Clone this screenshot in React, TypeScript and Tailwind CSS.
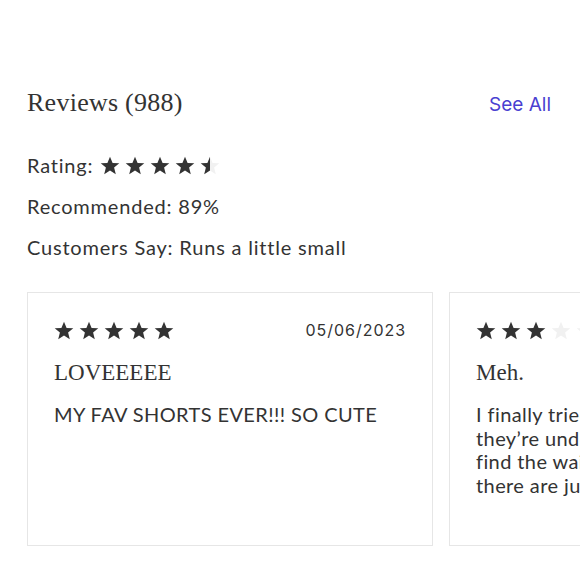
import React from 'react'

const SERIF = { fontFamily: '"Liberation Serif", "Times New Roman", serif' }
const SANS = { fontFamily: 'Lato, "Open Sans", sans-serif' }
const GEO = { fontFamily: 'Inter, "Noto Sans", sans-serif' }

const STAR = '10,0.8 12.6,7 19.3,7.3 14.1,11.6 15.8,18.2 10,14.5 4.2,18.2 5.9,11.6 0.7,7.3 7.4,7'

function Star({ fill }: { fill: 'full' | 'half' | 'empty' }) {
  return (
    <svg width="20" height="19" viewBox="0 0 20 19" className="shrink-0">
      <defs>
        <clipPath id="half-star">
          <rect x="0" y="0" width="10" height="19" />
        </clipPath>
      </defs>
      <polygon points={STAR} fill={fill === 'full' ? '#333333' : '#f1f1f1'} />
      {fill === 'half' && <polygon points={STAR} fill="#333333" clipPath="url(#half-star)" />}
    </svg>
  )
}

function Stars({ rating }: { rating: number }) {
  return (
    <div className="flex items-center gap-[5px]">
      {[1, 2, 3, 4, 5].map((n) => (
        <Star key={n} fill={rating >= n ? 'full' : rating >= n - 0.5 ? 'half' : 'empty'} />
      ))}
    </div>
  )
}

type Review = { rating: number; date: string; title: string; body: React.ReactNode }

const REVIEWS: Review[] = [
  { rating: 5, date: '05/06/2023', title: 'LOVEEEEE', body: 'MY FAV SHORTS EVER!!! SO CUTE' },
  {
    rating: 3,
    date: '04/28/2023',
    title: 'Meh.',
    body: (
      <>
        I finally tried these on and honestly<br />
        they’re underwhelming. I usually<br />
        find the waist too loose and<br />
        there are just too many pleats.
      </>
    ),
  },
]

function ReviewCard({ review }: { review: Review }) {
  return (
    <div className="w-[406px] h-[254px] shrink-0 border border-[#e6e6e6] bg-white px-[26px] pt-[27px]">
      <div className="flex items-center justify-between h-[20px]">
        <Stars rating={review.rating} />
        <span className="text-[16px] tracking-[0.06em] text-[#333]" style={GEO}>{review.date}</span>
      </div>
      <h3 className="mt-[18px] text-[23px] leading-[30px] text-[#333]" style={SERIF}>{review.title}</h3>
      <p className="mt-[15px] text-[20px] leading-[23.5px] tracking-[0.02em] whitespace-nowrap text-[#333]" style={SANS}>
        {review.body}
      </p>
    </div>
  )
}

export default function App() {
  return (
    <div className="w-[580px] h-[580px] overflow-hidden bg-white text-[#333]">
      <div className="pl-[27px] pt-[86px]">
        {/* Header */}
        <div className="flex items-baseline justify-between pr-[29px]">
          <h2 className="text-[26px] leading-[34px] tracking-[0.01em]" style={SERIF}>Reviews (988)</h2>
          <a className="text-[19px] text-[#4a3fd1]" style={GEO}>See All</a>
        </div>

        {/* Summary */}
        <div className="mt-[33px] flex flex-col gap-[17px] text-[20px] leading-[24px] tracking-[0.04em]" style={SANS}>
          <div className="flex items-center gap-[7px]">
            <span>Rating:</span>
            <Stars rating={4.5} />
          </div>
          <div>Recommended: 89%</div>
          <div>Customers Say: Runs a little small</div>
        </div>

        {/* Cards */}
        <div className="mt-[33px] flex gap-[16px]">
          {REVIEWS.map((r) => (
            <ReviewCard key={r.title} review={r} />
          ))}
        </div>
      </div>
    </div>
  )
}
